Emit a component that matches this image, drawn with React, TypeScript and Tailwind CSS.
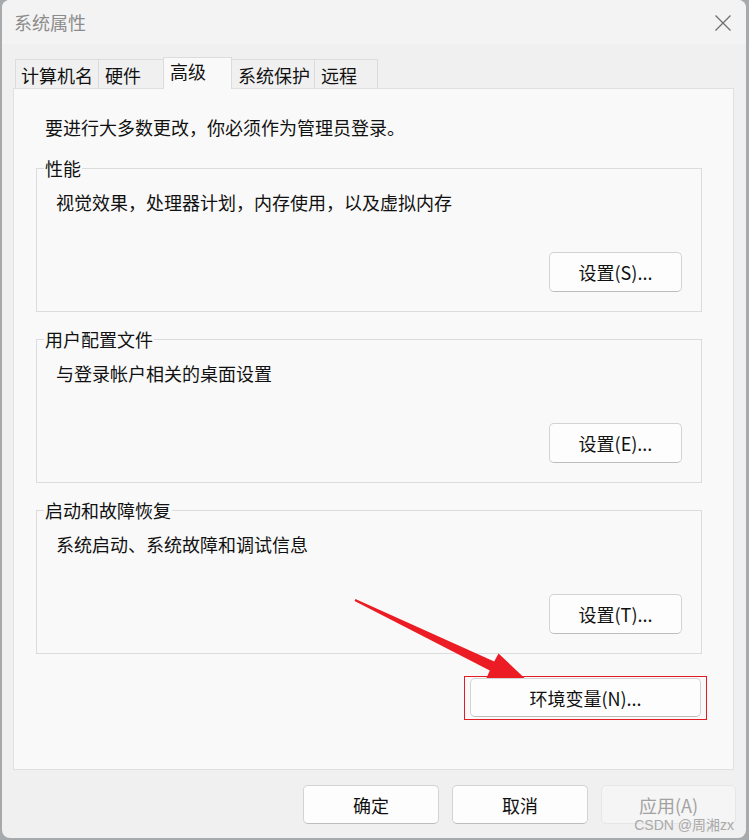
import React from "react";

const font = "font-['Noto_Sans_CJK_SC','Noto_Sans',sans-serif]";

function Btn({ label, className = "", disabled = false }: { label: string; className?: string; disabled?: boolean }) {
  return (
    <div
      className={
        "relative z-10 flex items-center justify-center rounded-[5px] border text-[18px] leading-[24px] " +
        (disabled
          ? "bg-[#f5f5f5] border-[#e6e6e6] text-[#a2a2a2] "
          : "bg-[#fdfdfd] border-[#d3d3d3] border-b-[#bdbdbd] text-[#111] ") +
        className
      }
    >
      {label}
    </div>
  );
}

function Group({ title, text, btn, className = "" }: { title: string; text: string; btn: string; className?: string }) {
  return (
    <fieldset className={"border border-[#dcdcdc] px-0 " + className}>
      <legend className="ml-[7px] px-[1px] leading-[24px] text-[18px] text-[#111]">{title}</legend>
      <div className="flex flex-col px-[19px] pb-[19px]">
        <div className="mt-[10px] leading-[24px] text-[18px] text-[#111]">{text}</div>
        <div className="mt-[38px] flex justify-end">
          <Btn label={btn} className="w-[133px] h-[40px]" />
        </div>
      </div>
    </fieldset>
  );
}

export default function App() {
  return (
    <div className={"w-[749px] h-[840px] bg-[#a6aaad] pl-[2px] pr-[3px] pb-[2px] " + font}>
      <div className="relative w-[744px] h-[838px] rounded-[8px] bg-[#f0f0f0] flex flex-col overflow-hidden">
        {/* title bar */}
        <div className="h-[44px] bg-[#f3f3f3] flex items-center justify-between pl-[12px] pr-[15px]">
          <span className="text-[18px] leading-[24px] text-[#8c8c8c]">系统属性</span>
          <svg width="16" height="16" viewBox="0 0 16 16" className="mt-[1px]">
            <path d="M0.5 0.5 L15.5 15.5 M15.5 0.5 L0.5 15.5" stroke="#6f6f6f" strokeWidth="1.3" fill="none" />
          </svg>
        </div>

        {/* tabs */}
        <div className="mt-[13px] ml-[13px] h-[31px] flex items-end text-[18px] leading-[24px] text-[#111]">
          <div className="w-[83px] h-[29px] border-t border-l border-[#dcdcdc] bg-[#f0f0f0] pl-[5px] pt-[3px]">计算机名</div>
          <div className="w-[65px] h-[29px] border-t border-l border-[#dcdcdc] bg-[#f0f0f0] pl-[6px] pt-[3px]">硬件</div>
          <div className="relative z-10 w-[69px] h-[32px] -mb-[1px] border-t border-l border-r border-[#dcdcdc] bg-[#f9f9f9] pl-[6px] pt-[1px]">高级</div>
          <div className="w-[82px] h-[29px] border-t border-[#dcdcdc] bg-[#f0f0f0] pl-[6px] pt-[3px]">系统保护</div>
          <div className="w-[64px] h-[29px] border-t border-l border-r border-[#dcdcdc] bg-[#f0f0f0] pl-[6px] pt-[3px]">远程</div>
        </div>

        {/* panel */}
        <div className="ml-[11px] w-[721px] h-[682px] border border-[#e0e0e0] bg-[#f9f9f9] pl-[22px] pr-[31px] pt-[26px] flex flex-col">
          <div className="ml-[9px] text-[18px] leading-[24px] text-[#111]">要进行大多数更改，你必须作为管理员登录。</div>
          <Group className="mt-[17px]" title="性能" text="视觉效果，处理器计划，内存使用，以及虚拟内存" btn="设置(S)..." />
          <Group className="mt-[15px]" title="用户配置文件" text="与登录帐户相关的桌面设置" btn="设置(E)..." />
          <Group className="mt-[15px]" title="启动和故障恢复" text="系统启动、系统故障和调试信息" btn="设置(T)..." />
          <div className="mt-[22px] flex justify-end -mr-[5px]">
            <div className="border border-[#e31b23] pl-[5px] pr-[5px] pt-[1px] pb-[2px]">
              <Btn label="环境变量(N)..." className="w-[231px] h-[39px]" />
            </div>
          </div>
        </div>

        {/* bottom buttons */}
        <div className="mt-[15px] flex justify-end gap-[13px] pr-[10px]">
          <Btn label="确定" className="w-[136px] h-[39px]" />
          <Btn label="取消" className="w-[136px] h-[39px]" />
          <Btn label="应用(A)" className="w-[135px] h-[39px]" disabled />
        </div>

        {/* arrow annotation */}
        <svg
          width="749"
          height="840"
          viewBox="0 0 749 840"
          className="absolute left-[-2px] top-0 z-[5] pointer-events-none"
        >
          <defs>
            <clipPath id="arrowclip">
              <rect x="0" y="0" width="749" height="679" />
            </clipPath>
          </defs>
          <polygon
            clipPath="url(#arrowclip)"
            fill="#ec1c24"
            points="355.4,599.1 494.2,661.5 498.5,653.4 534,687 486,679 489.8,670.5 354.6,600.9"
          />
        </svg>

        {/* watermark */}
        <div className="absolute right-[12px] bottom-[5px] z-20 text-[14px] leading-[16px] text-[#a9a9a9] font-['Liberation_Sans','Noto_Sans_CJK_SC',sans-serif]">
          CSDN @周湘zx
        </div>
      </div>
    </div>
  );
}
